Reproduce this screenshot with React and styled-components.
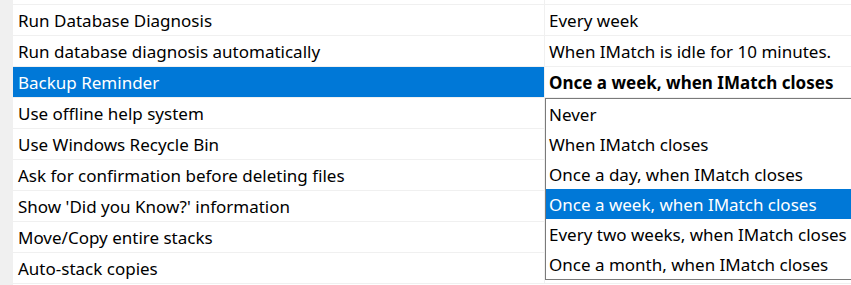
import React from "react";
import styled, { createGlobalStyle } from "styled-components";

const GlobalStyle = createGlobalStyle`
  html, body {
    margin: 0;
    padding: 0;
    background: #ffffff;
    overflow: hidden;
  }
  body {
    font-family: "Noto Sans", "Open Sans", sans-serif;
    font-size: 17px;
    color: #000000;
  }
`;

const Page = styled.div`
  display: flex;
  width: 851px;
  height: 285px;
  overflow: hidden;
`;

const Gutter = styled.div`
  width: 13px;
  flex-shrink: 0;
  background: #f0f0f0;
`;

const Grid = styled.div`
  flex: 1;
  display: flex;
  flex-direction: column;
`;

const Row = styled.div`
  display: grid;
  grid-template-columns: 532px 1fr;
  height: ${(p) => (p.$stub ? 4 : 30)}px;
  flex-shrink: 0;
  border-bottom: 1px solid #f0f0f0;
`;

const NameCell = styled.div`
  display: flex;
  align-items: center;
  padding-left: 5px;
  border-right: 1px solid #f0f0f0;
  white-space: nowrap;
  background: ${(p) => (p.$selected ? "#0078d7" : "transparent")};
  color: ${(p) => (p.$selected ? "#ffffff" : "#000000")};
`;

const ValueCell = styled.div`
  position: relative;
  display: flex;
  align-items: center;
  padding-left: 4px;
  white-space: nowrap;
  font-weight: ${(p) => (p.$bold ? 700 : 400)};
`;

const Dropdown = styled.ul`
  position: absolute;
  top: calc(100% + 1px);
  left: 0;
  width: 320px;
  margin: 0;
  padding: 0;
  list-style: none;
  background: #ffffff;
  border: 1px solid #7a7a7a;
  font-weight: 400;
  z-index: 2;
`;

const Option = styled.li`
  height: 30px;
  display: flex;
  align-items: center;
  padding-left: 3px;
  background: ${(p) => (p.$active ? "#0078d7" : "transparent")};
  color: ${(p) => (p.$active ? "#ffffff" : "#000000")};
`;

const rows = [
  { name: "Run Database Diagnosis", value: "Every week" },
  { name: "Run database diagnosis automatically", value: "When IMatch is idle for 10 minutes." },
  { name: "Backup Reminder", value: "Once a week, when IMatch closes", selected: true },
  { name: "Use offline help system" },
  { name: "Use Windows Recycle Bin" },
  { name: "Ask for confirmation before deleting files" },
  { name: "Show 'Did you Know?' information" },
  { name: "Move/Copy entire stacks" },
  { name: "Auto-stack copies" },
];

const options = [
  "Never",
  "When IMatch closes",
  "Once a day, when IMatch closes",
  "Once a week, when IMatch closes",
  "Every two weeks, when IMatch closes",
  "Once a month, when IMatch closes",
];

export default function App() {
  return (
    <>
      <GlobalStyle />
      <Page>
        <Gutter />
        <Grid>
          <Row $stub>
            <NameCell />
            <ValueCell />
          </Row>
          {rows.map((row) => (
            <Row key={row.name}>
              <NameCell $selected={row.selected}>{row.name}</NameCell>
              <ValueCell $bold={row.selected}>
                {row.value}
                {row.selected && (
                  <Dropdown>
                    {options.map((opt) => (
                      <Option key={opt} $active={opt === row.value}>
                        {opt}
                      </Option>
                    ))}
                  </Dropdown>
                )}
              </ValueCell>
            </Row>
          ))}
        </Grid>
      </Page>
    </>
  );
}
